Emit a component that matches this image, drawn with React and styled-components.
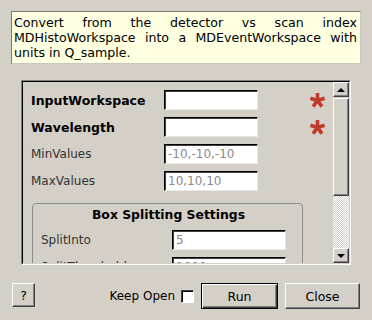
import React from 'react'
import styled, { createGlobalStyle } from 'styled-components'

const Global = createGlobalStyle`
  html, body {
    margin: 0;
    padding: 0;
    background: #d4d0c8;
  }
  body {
    font-family: "DejaVu Sans", "Liberation Sans", sans-serif;
    font-size: 12px;
    color: #000;
  }
`;

const Dialog = styled.div`
  width: 372px;
  height: 320px;
  display: flex;
  flex-direction: column;
  overflow: hidden;
`;

const Description = styled.div`
  margin: 11px 11px 0 11px;
  height: 53px;
  box-sizing: border-box;
  padding: 3px 3px 2px 2px;
  background: #ffffe1;
  border: 1px solid;
  border-color: #7a7a7a #c8c8c0 #c8c8c0 #7a7a7a;
  font-size: 12.6px;
  line-height: 15px;
  text-align: justify;
`;

const Frame = styled.div`
  margin: 16px 0 0 21px;
  width: 330px;
  height: 185px;
  box-sizing: border-box;
  border: 1px solid;
  border-color: #808080 #fff #fff #808080;
`;

const FrameInner = styled.div`
  height: 100%;
  box-sizing: border-box;
  border: 1px solid;
  border-color: #000 #d4d0c8 #d4d0c8 #000;
  display: flex;
`;

const Viewport = styled.div`
  flex: 1;
  overflow: hidden;
  padding: 8px 0 0 8px;
`;

const PropGrid = styled.div`
  display: grid;
  grid-template-columns: ${p => p.$label}px ${p => p.$input}px auto;
  row-gap: 7px;
  align-items: center;
`;

const Label = styled.div`
  font-weight: ${p => (p.$bold ? 'bold' : 'normal')};
  font-size: ${p => (p.$bold ? '12.5px' : '12px')};
  color: ${p => (p.$bold ? '#000' : '#333')};
  white-space: nowrap;
`;

const Field = styled.div`
  height: 20px;
  box-sizing: border-box;
  background: #fff;
  border: 1px solid;
  border-color: #000 #e8e8e8 #e8e8e8 #000;
  box-shadow: inset 1px 1px 0 #404040;
  padding: 0 3px;
  color: #8a8a8a;
  line-height: 18px;
  overflow: hidden;
  white-space: nowrap;
`;

const StarCell = styled.div`
  padding-left: 51px;
  display: flex;
  align-items: center;
`;

const GroupBox = styled.div`
  margin: 12px 0 0 1px;
  width: 271px;
  box-sizing: border-box;
  border: 1px solid #8c8c8c;
  border-radius: 4px;
  padding: 4px 0 20px 8px;
`;

const GroupTitle = styled.div`
  font-weight: bold;
  font-size: 12.4px;
  text-align: center;
  line-height: 14px;
  margin-bottom: 8px;
  padding-right: 6px;
`;

const ScrollBar = styled.div`
  width: 16px;
  display: flex;
  flex-direction: column;
`;

const ScrollButton = styled.div`
  height: 15px;
  box-sizing: border-box;
  border: 1px solid;
  border-color: #fff #404040 #404040 #fff;
  box-shadow: inset -1px -1px 0 #808080;
  background: #d4d0c8;
  display: flex;
  align-items: center;
  justify-content: center;
`;

const Handle = styled.div`
  margin-top: 1px;
  height: 98px;
  box-sizing: border-box;
  border: 1px solid;
  border-color: #fff #404040 #404040 #fff;
  box-shadow: inset -1px -1px 0 #808080;
  background: #d4d0c8;
`;

const Track = styled.div`
  flex: 1;
  background-color: #d4d0c8;
  background-image: repeating-conic-gradient(#ffffff 0 25%, #d4d0c8 0 50%);
  background-size: 2px 2px;
`;

const Arrow = styled.div`
  width: 0;
  height: 0;
  border-left: 4px solid transparent;
  border-right: 4px solid transparent;
  ${p => (p.$down ? 'border-top: 4px solid #000;' : 'border-bottom: 4px solid #000;')}
`;

const ButtonBar = styled.div`
  margin-top: 18px;
  padding: 0 12px;
  display: flex;
  align-items: flex-start;
`;

const Button = styled.div`
  width: ${p => p.$w}px;
  height: ${p => p.$h}px;
  box-sizing: border-box;
  background: #d4d0c8;
  border: 1px solid;
  border-color: ${p => (p.$default ? '#000' : '#fff #404040 #404040 #fff')};
  box-shadow: ${p =>
    p.$default
      ? 'inset 1px 1px 0 #fff, inset -1px -1px 0 #404040, inset -2px -2px 0 #808080'
      : 'inset -1px -1px 0 #808080'};
  display: flex;
  align-items: center;
  justify-content: center;
  font-size: 12.5px;
  color: #000;
  margin-left: ${p => p.$ml || 0}px;
`;

const Spacer = styled.div`
  flex: 1;
`;

const KeepOpen = styled.label`
  display: flex;
  align-items: center;
  height: 26px;
  font-size: 12px;
  gap: 6px;
`;

const Check = styled.span`
  width: 13px;
  height: 13px;
  box-sizing: border-box;
  background: #fff;
  border: 1px solid;
  border-color: #404040 #fff #fff #404040;
  box-shadow: inset 1px 1px 0 #000;
`;

function Star() {
  const arms = [-90, -18, 54, 126, 198]
  return (
    <svg width="17" height="17" viewBox="-8.5 -8.5 17 17">
      {arms.map(a => {
        const r = (a * Math.PI) / 180
        return (
          <line
            key={a}
            x1="0"
            y1="0"
            x2={(7.5 * Math.cos(r)).toFixed(2)}
            y2={(7.5 * Math.sin(r)).toFixed(2)}
            stroke="#be3a2b"
            strokeWidth="3.6"
            strokeLinecap="butt"
          />
        )
      })}
    </svg>
  )
}

const props = [
  { name: 'InputWorkspace', value: '', required: true },
  { name: 'Wavelength', value: '', required: true },
  { name: 'MinValues', value: '-10,-10,-10' },
  { name: 'MaxValues', value: '10,10,10' },
]

const splitProps = [
  { name: 'SplitInto', value: '5' },
  { name: 'SplitThreshold', value: '1000' },
  { name: 'MaxRecursionDepth', value: '5' },
]

export default function App() {
  return (
    <>
      <Global />
      <Dialog>
        <Description>
          Convert from the detector vs scan index MDHistoWorkspace into a MDEventWorkspace with units in Q_sample.
        </Description>
        <Frame>
          <FrameInner>
            <Viewport>
              <PropGrid $label={133} $input={94}>
                {props.map(p => (
                  <React.Fragment key={p.name}>
                    <Label $bold={p.required}>{p.name}</Label>
                    <Field>{p.value}</Field>
                    <StarCell>{p.required && <Star />}</StarCell>
                  </React.Fragment>
                ))}
              </PropGrid>
              <GroupBox>
                <GroupTitle>Box Splitting Settings</GroupTitle>
                <PropGrid $label={131} $input={114}>
                  {splitProps.map(p => (
                    <React.Fragment key={p.name}>
                      <Label>{p.name}</Label>
                      <Field>{p.value}</Field>
                      <div />
                    </React.Fragment>
                  ))}
                </PropGrid>
              </GroupBox>
            </Viewport>
            <ScrollBar>
              <ScrollButton><Arrow /></ScrollButton>
              <Handle />
              <Track />
              <ScrollButton><Arrow $down /></ScrollButton>
            </ScrollBar>
          </FrameInner>
        </Frame>
        <ButtonBar>
          <Button $w={23} $h={24}>?</Button>
          <Spacer />
          <KeepOpen>
            Keep Open
            <Check />
          </KeepOpen>
          <Button $w={77} $h={26} $ml={7} $default>Run</Button>
          <Button $w={75} $h={26} $ml={7}>Close</Button>
        </ButtonBar>
      </Dialog>
    </>
  )
}
